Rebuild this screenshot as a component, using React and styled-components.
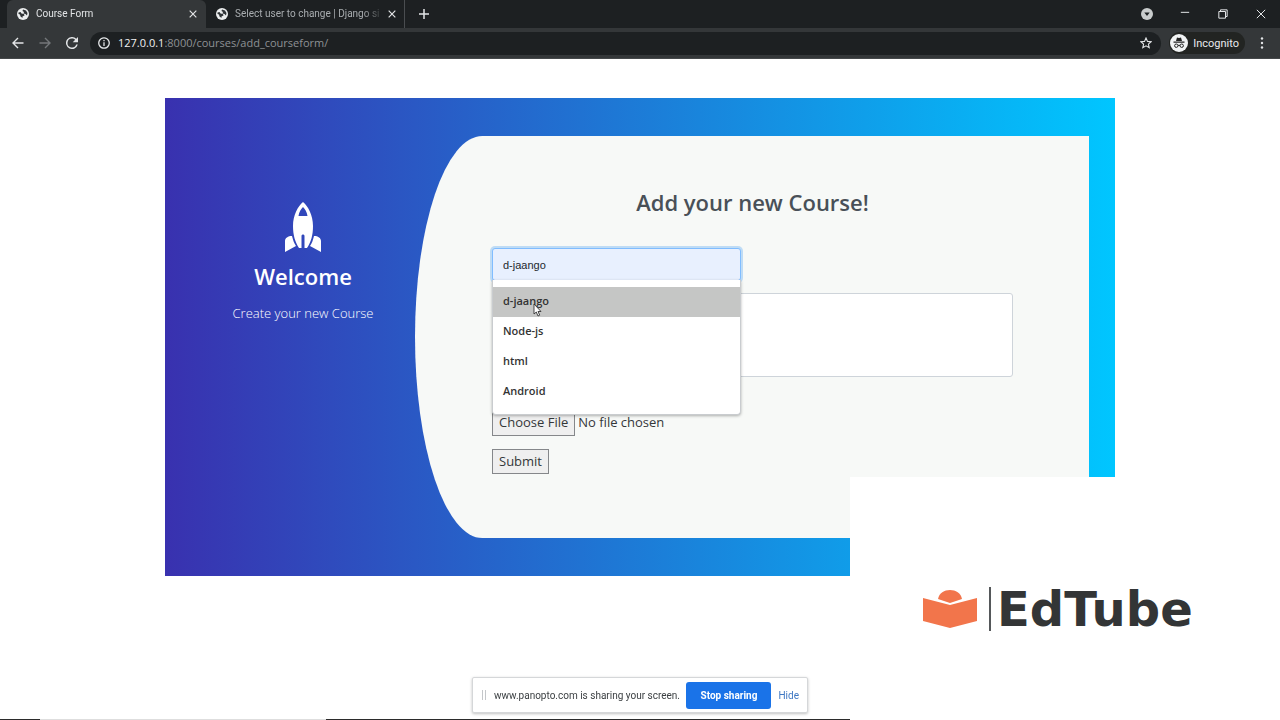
import styled, { createGlobalStyle, css } from "styled-components";

const GlobalStyle = createGlobalStyle`
  * {
    box-sizing: border-box;
  }
  body {
    margin: 0;
    background: #fff;
    font-family: "Open Sans", "Noto Sans", sans-serif;
    overflow: hidden;
  }
  button, input, textarea {
    font-family: inherit;
  }
`;

const Page = styled.div`
  min-height: 100vh;
  display: flex;
  flex-direction: column;
`;

const TabStrip = styled.div`
  display: flex;
  align-items: center;
  height: 28px;
  padding-left: 7px;
  background: #1d2022;
`;

const Tab = styled.div`
  display: flex;
  align-items: center;
  width: 199px;
  height: 28px;
  padding: 0 8px 0 10px;
  gap: 7px;
  font-family: Roboto, sans-serif;
  font-size: 10px;
  color: ${(props) => (props.$active ? "#e3e5e7" : "#a9adb0")};
  svg {
    flex-shrink: 0;
  }
  ${(props) =>
    props.$active
      ? css`
          background: #343739;
          border-radius: 6px 6px 0 0;
        `
      : css`
          border-right: 1px solid #4a4d50;
        `}
`;

const TabTitle = styled.span`
  flex: 1;
  white-space: nowrap;
  line-height: 16px;
  mask-image: linear-gradient(to right, #000 88%, rgba(0, 0, 0, 0.2));
`;

const IconButton = styled.button`
  display: flex;
  flex-shrink: 0;
  align-items: center;
  justify-content: center;
  width: ${(props) => props.$width || 12}px;
  height: 20px;
  padding: 0;
  border: 0;
  background: none;
  color: ${(props) => (props.$dim ? "#74777a" : "#e3e5e7")};
`;

const WindowControls = styled.div`
  display: flex;
  align-items: center;
  margin-left: auto;
`;

const Toolbar = styled.div`
  display: flex;
  align-items: center;
  height: 31px;
  padding: 0 12px 0 5px;
  background: #343739;
  border-bottom: 1px solid #45484a;
`;

const AddressBar = styled.div`
  flex: 1;
  display: flex;
  align-items: center;
  height: 23px;
  margin: 0 8px 0 5px;
  padding: 0 8px 0 8px;
  gap: 8px;
  border-radius: 12px;
  background: #1d2022;
  color: #e3e5e7;
`;

const Address = styled.div`
  flex: 1;
  font-size: 11px;
  line-height: 16px;
  color: #8d9194;
  outline: none;
  b {
    font-weight: 400;
    color: #f0f1f2;
  }
`;

const Incognito = styled.button`
  display: flex;
  align-items: center;
  height: 22px;
  padding: 0 6px 0 1px;
  gap: 5px;
  border: 0;
  border-radius: 11px;
  background: #222422;
  color: #e8eaed;
  font-family: Roboto, sans-serif;
  font-size: 11px;
  margin-right: 11px;
`;

const Main = styled.main`
  padding: 39px 24px;
`;

const Register = styled.section`
  display: grid;
  grid-template-columns: 224px 1fr;
  max-width: 950px;
  margin: 0 auto;
  padding: 38px 26px;
  background: linear-gradient(to right, #3931af, #00c6ff);
`;

const Intro = styled.div`
  display: flex;
  flex-direction: column;
  align-items: center;
  padding-top: 66px;
  color: #fff;
  h3 {
    margin: 8px 0 0;
    font-size: 22px;
    font-weight: 600;
    line-height: 32px;
  }
  p {
    margin: 11px 0 0;
    font-size: 13px;
    font-weight: 300;
    line-height: 20px;
  }
`;

const Panel = styled.div`
  min-height: 402px;
  padding: 52px 76px 64px 77px;
  background: #f7f9f7;
  border-radius: 10% 0 0 10% / 50% 0 0 50%;
`;

const Heading = styled.h3`
  margin: 0 0 32px;
  font-size: 22px;
  font-weight: 600;
  line-height: 28px;
  text-align: center;
  color: #495057;
`;

const CourseForm = styled.form`
  display: flex;
  flex-direction: column;
  align-items: flex-start;
  gap: 12px;
`;

const NameField = styled.div`
  position: relative;
  width: 249px;
`;

const TextInput = styled.input`
  display: block;
  width: 100%;
  height: 33px;
  padding: 0 10px;
  border: 1px solid #80bdff;
  border-radius: 3px;
  outline: none;
  background: #e8f0fe;
  box-shadow: 0 0 0 2px #bfdcf5;
  font-family: "Liberation Sans", Arial, sans-serif;
  font-size: 11px;
  color: #23282d;
`;

const Suggestions = styled.ul`
  position: absolute;
  z-index: 2;
  top: 32px;
  left: 0;
  width: 100%;
  margin: 0;
  padding: 7px 0;
  list-style: none;
  background: #fff;
  border: 1px solid #c9cccf;
  border-top: 0;
  border-radius: 0 0 4px 4px;
  box-shadow: 0 1px 3px rgba(0, 0, 0, 0.3);
`;

const Suggestion = styled.li`
  height: 30px;
  padding: 0 10px;
  font-size: 11px;
  font-weight: 600;
  line-height: 28px;
  color: #333;
  background: ${(props) => (props.$hover ? "#c5c6c5" : "transparent")};
`;

const Pointer = styled.svg`
  position: absolute;
  z-index: 3;
  top: 55px;
  left: 41px;
`;

const Description = styled.textarea`
  display: block;
  width: 100%;
  height: 84px;
  border: 1px solid #ced4da;
  border-radius: 3px;
  background: #fff;
  resize: none;
`;

const classicButton = css`
  height: 25px;
  padding: 0 6px 2px;
  border: 1px solid #85878a;
  border-radius: 0;
  background: #efefef;
  color: #343739;
  font-family: inherit;
  font-size: 13px;
  line-height: 20px;
`;

const FileInput = styled.input`
  height: 27px;
  margin-top: 21px;
  font-size: 13px;
  line-height: 25px;
  color: #343739;
  &::file-selector-button {
    ${classicButton}
    margin: 0 3px 0 0;
  }
`;

const Submit = styled.button`
  ${classicButton}
`;

const Brand = styled.aside`
  position: fixed;
  right: 0;
  bottom: 0;
  z-index: 4;
  display: flex;
  align-items: center;
  width: 430px;
  height: 243px;
  padding: 20px 0 0 72px;
  background: #fff;
  color: #333536;
  font-family: "DejaVu Sans", sans-serif;
  font-size: 48px;
  font-weight: 700;
  line-height: 48px;
`;

const Rule = styled.span`
  width: 2px;
  height: 44px;
  margin: 0 6px 0 11px;
  background: #55585a;
`;

const ShareBar = styled.div`
  position: fixed;
  left: 50%;
  bottom: 7px;
  transform: translateX(-50%);
  z-index: 5;
  display: flex;
  align-items: center;
  width: 336px;
  height: 36px;
  padding: 0 8px 0 9px;
  background: #fff;
  border: 1px solid #d5d7d9;
  border-radius: 2px;
  box-shadow: 0 1px 3px rgba(0, 0, 0, 0.25);
  font-family: Roboto, sans-serif;
  font-size: 10px;
  color: #3c4043;
  white-space: nowrap;
`;

const Grip = styled.span`
  width: 4px;
  height: 10px;
  margin-right: 8px;
  border: solid #c4c7ca;
  border-width: 0 1px;
`;

const StopButton = styled.button`
  width: 85px;
  height: 27px;
  margin-left: auto;
  padding: 0;
  border: 0;
  border-radius: 3px;
  background: #1a73e8;
  color: #fff;
  font-size: 10px;
  font-weight: 700;
`;

const HideButton = styled.button`
  margin-left: 7px;
  padding: 0;
  border: 0;
  background: none;
  color: #3f78c3;
  font-size: 10px;
`;

const Taskbar = styled.div`
  position: fixed;
  left: 0;
  right: 0;
  bottom: 0;
  height: 1px;
  background: linear-gradient(to right, #2b2b2b 40px, #dedede 40px 326px, #2b2b2b 326px);
`;

const Stroke = ({ d, size = 12, width = 1.4 }) => (
  <svg width={size} height={size} viewBox='0 0 12 12' fill='none' stroke='currentColor' strokeWidth={width}>
    <path d={d} />
  </svg>
);

const Globe = () => (
  <svg width='12' height='12' viewBox='0 0 24 24'>
    <circle cx='12' cy='12' r='12' fill='#eceeef' />
    <path
      d='M3 9l4-1 2 3 5 1 1 3-4 2 0 3-4-3-1-4-3-1zM12 3l-1 3 3 2-1 3 4 1 3 3 1-5-3-5z'
      fill='#303437'
    />
  </svg>
);

const Rocket = () => (
  <svg width='36' height='50' viewBox='0 0 36 50' fill='#fff'>
    <path
      fillRule='evenodd'
      d='M18 0C23 4 28 13 28 24c0 9-2 16-6 22h-2.500V34c0-2-3-2-3 0v12H14C10 40 8 33 8 24 8 13 13 4 18 0zM18 5c-2 2-4 5-4.500 9h9C22 10 20 7 18 5z'
    />
    <path d='M7 34c1 4 2 7 4 10L0 50V39c0-3 3-5 7-5zM29 34c-1 4-2 7-4 10l11 6V39c0-3-3-5-7-5z' />
  </svg>
);

const BookLogo = () => (
  <svg width='56' height='38' viewBox='0 0 56 38' fill='#f2754b'>
    <path d='M1 8l27 7 27-7v23l-27 7-27-7z' />
    <path d='M16 9c2-12 22-12 24 0l-12 4z' />
  </svg>
);

const IncognitoIcon = () => (
  <svg width='18' height='18' viewBox='0 0 18 18'>
    <circle cx='9' cy='9' r='9' fill='#f1f3f4' />
    <path d='M6 7l1-3.500 2 .5 2-.5L12 7zM3.500 7.500h11v1.200h-11z' fill='#222' />
    <g fill='none' stroke='#222' strokeWidth='1'>
      <circle cx='6.300' cy='11.700' r='1.700' />
      <circle cx='11.700' cy='11.700' r='1.700' />
      <path d='M8 11.500q1-.6 2 0' />
    </g>
  </svg>
);

const tabs = [
  { title: "Course Form", active: true },
  { title: "Select user to change | Django si", active: false },
];

const courses = ["d-jaango", "Node-js", "html", "Android"];

const Browser = () => (
  <header>
    <TabStrip>
      {tabs.map((tab) => (
        <Tab key={tab.title} $active={tab.active}>
          <Globe />
          <TabTitle>{tab.title}</TabTitle>
          <IconButton $width={10} aria-label='Close tab'>
            <Stroke size={10} d='M2 2l8 8M10 2l-8 8' />
          </IconButton>
        </Tab>
      ))}
      <IconButton $width={38} aria-label='New tab'>
        <Stroke d='M6 1v10M1 6h10' width={1.5} />
      </IconButton>
      <WindowControls>
        <IconButton $width={38} aria-label='Search tabs'>
          <svg width='12' height='12' viewBox='0 0 12 12'>
            <circle cx='6' cy='6' r='6' fill='#c9cccd' />
            <path d='M3.300 4.500h5.400L6 8z' fill='#1d2022' />
          </svg>
        </IconButton>
        <IconButton $width={38} aria-label='Minimize'>
          <Stroke size={10} d='M1 4h10' width={1.2} />
        </IconButton>
        <IconButton $width={38} aria-label='Restore'>
          <Stroke size={10} d='M1 3h8v8h-8zM3 3V1h8v8H9' width={1.2} />
        </IconButton>
        <IconButton $width={38} aria-label='Close window'>
          <Stroke size={10} d='M1 1l10 10M11 1L1 11' width={1.2} />
        </IconButton>
      </WindowControls>
    </TabStrip>
    <Toolbar>
      <IconButton $width={26} aria-label='Back'>
        <Stroke d='M11.500 6H1M6 1L1 6l5 5' />
      </IconButton>
      <IconButton $width={27} $dim aria-label='Forward'>
        <Stroke d='M.5 6H11M6 1l5 5-5 5' />
      </IconButton>
      <IconButton $width={27} aria-label='Reload'>
        <svg width='12' height='12' viewBox='0 0 16 16' fill='currentColor'>
          <path d='M13.650 2.350A8 8 0 1 0 15.730 10h-2.080A6 6 0 1 1 8 2c1.660 0 3.140.690 4.220 1.780L9 7h7V0z' />
        </svg>
      </IconButton>
      <AddressBar>
        <Stroke d='M6 .8a5.200 5.200 0 1 0 .01 0M6 5.200v3.800M6 3v1.300' width={1.3} />
        <Address role='textbox' aria-label='Address'>
          <b>127.0.0.1</b>:8000/courses/add_courseform/
        </Address>
        <IconButton $width={14} aria-label='Bookmark'>
          <Stroke d='M6 1l1.500 3.400 3.600.3-2.700 2.400.8 3.600L6 8.800l-3.200 1.900.8-3.600L.9 4.700l3.600-.3z' width={1.1} />
        </IconButton>
      </AddressBar>
      <Incognito>
        <IncognitoIcon />
        Incognito
      </Incognito>
      <IconButton aria-label='Menu'>
        <svg width='4' height='12' viewBox='0 0 4 12' fill='currentColor'>
          <circle cx='2' cy='1.500' r='1.200' />
          <circle cx='2' cy='6' r='1.200' />
          <circle cx='2' cy='10.500' r='1.200' />
        </svg>
      </IconButton>
    </Toolbar>
  </header>
);

const App = () => (
  <Page>
    <GlobalStyle />
    <Browser />
    <Main>
      <Register>
        <Intro>
          <Rocket />
          <h3>Welcome</h3>
          <p>Create your new Course</p>
        </Intro>
        <Panel>
          <Heading>Add your new Course!</Heading>
          <CourseForm onSubmit={(e) => e.preventDefault()}>
            <NameField>
              <TextInput aria-label='Course name' defaultValue='d-jaango' />
              <Suggestions>
                {courses.map((course, i) => (
                  <Suggestion key={course} $hover={i === 0}>
                    {course}
                  </Suggestion>
                ))}
              </Suggestions>
              <Pointer width='9' height='14' viewBox='0 0 9 14'>
                <path d='M1 1v10l2.300-2 1.700 4 1.700-.8L5 8.500h3z' fill='#fff' stroke='#222' strokeWidth='.8' />
              </Pointer>
            </NameField>
            <Description aria-label='Description' />
            <FileInput type='file' aria-label='Course file' />
            <Submit type='submit'>Submit</Submit>
          </CourseForm>
        </Panel>
      </Register>
    </Main>
    <Taskbar />
    <Brand>
      <BookLogo />
      <Rule />
      EdTube
    </Brand>
    <ShareBar>
      <Grip />
      www.panopto.com is sharing your screen.
      <StopButton>Stop sharing</StopButton>
      <HideButton>Hide</HideButton>
    </ShareBar>
  </Page>
);

export default App;
